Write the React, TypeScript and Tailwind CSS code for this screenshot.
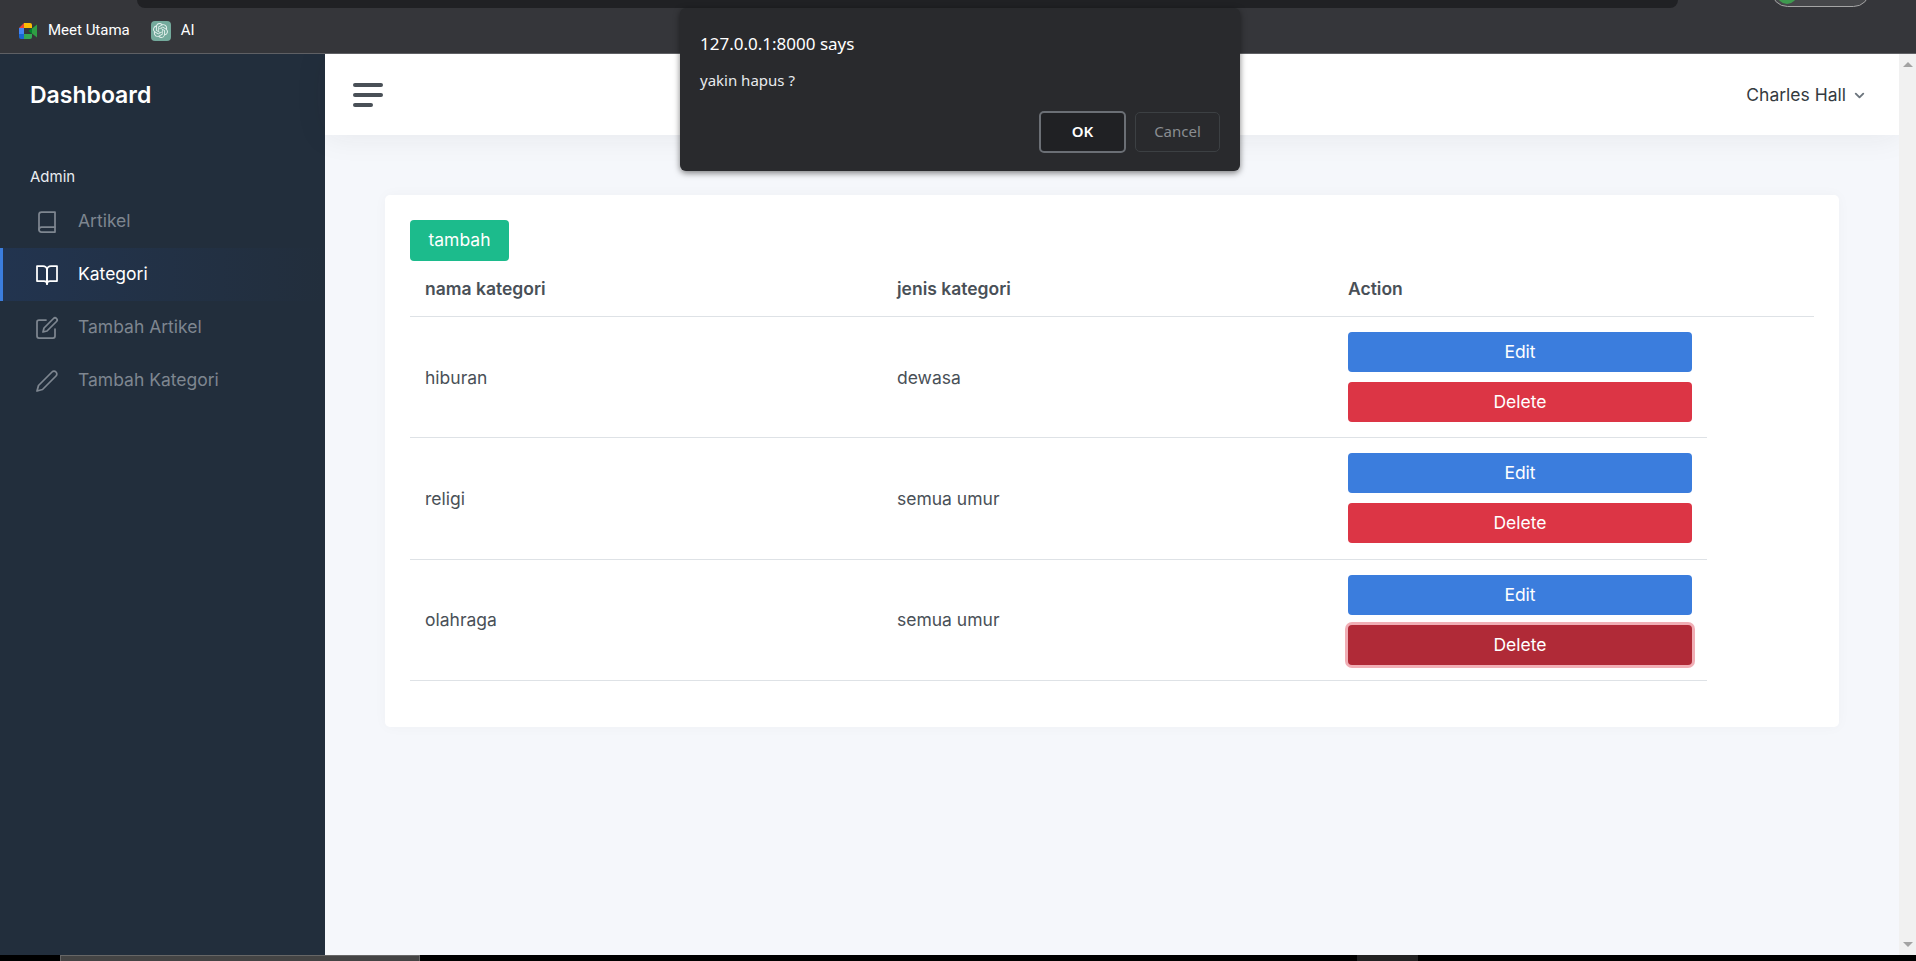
import { FiBook, FiBookOpen, FiEdit, FiEdit2, FiChevronDown } from "react-icons/fi";
import { SiOpenai } from "react-icons/si";

const menu = [
  { label: "Artikel", icon: FiBook },
  { label: "Kategori", icon: FiBookOpen, active: true },
  { label: "Tambah Artikel", icon: FiEdit },
  { label: "Tambah Kategori", icon: FiEdit2 },
];

const rows = [
  { nama: "hiburan", jenis: "dewasa" },
  { nama: "religi", jenis: "semua umur" },
  { nama: "olahraga", jenis: "semua umur", focused: true },
];

function MeetIcon() {
  return (
    <svg width="18" height="16" viewBox="0 0 18 16">
      <path d="M5 0H11a2 2 0 0 1 2 2V5H5z" fill="#fbbc04" />
      <path d="M5 0V5H0z" fill="#ea4335" />
      <path d="M0 5h5v6H0z" fill="#4285f4" />
      <path d="M0 11h5v5H2a2 2 0 0 1-2-2z" fill="#1967d2" />
      <path d="M5 11h8v3a2 2 0 0 1-2 2H5z" fill="#34a853" />
      <path d="M9.5 8 13 5v6z" fill="#00832d" />
      <path d="M13 5.5 18 1.5v13l-5-4z" fill="#2f9e44" />
    </svg>
  );
}

function GptIcon() {
  return (
    <div className="w-5 h-5 rounded-sm bg-[#74aa9c] flex items-center justify-center">
      <SiOpenai size={15} className="text-[#e3efec]" />
    </div>
  );
}

function App() {
  return (
    <div className="relative h-[961px] w-[1916px] overflow-hidden bg-black font-['Inter',sans-serif]">
      {/* browser chrome */}
      <div className="h-[54px] bg-[#35363a] border-b border-[#5f6064] relative overflow-hidden">
        <div className="absolute left-[137px] top-0 w-[1541px] h-2 bg-[#202124] rounded-b-2xl" />
        <div className="absolute left-[1771px] top-[-26px] w-[99px] h-[33px] bg-[#46474a] border border-[#a5a5a5] rounded-full" />
        <div className="absolute left-[1777px] top-[-16px] w-5 h-5 bg-[#3f9a4f] rounded-full" />
        <div className="flex items-center h-full pl-[19px] pt-[8px] text-[15px] text-white font-['Roboto',sans-serif]">
          <MeetIcon />
          <span className="ml-[11px]">Meet Utama</span>
          <span className="ml-[21px]"><GptIcon /></span>
          <span className="ml-[10px]">AI</span>
        </div>
      </div>

      <div className="flex h-[901px]">
        {/* sidebar */}
        <aside className="w-[325px] bg-[#222e3c] shrink-0">
          <div className="pl-[30px] pt-[26px] text-[23px] leading-[30px] font-semibold text-white">Dashboard</div>
          <div className="pl-[30px] mt-[57px] text-[15px] leading-[20px] text-[#e9ecef]">Admin</div>
          <div className="mt-[8px]">
            {menu.map((m) => {
              const Icon = m.icon;
              return (
                <div
                  key={m.label}
                  className={
                    m.active
                      ? "flex items-center h-[53px] pl-[32px] border-l-[3px] border-[#3b7ddd] bg-gradient-to-r from-[#22344f] to-[#222e3c] text-white"
                      : "flex items-center h-[53px] pl-[32px] border-l-[3px] border-transparent text-[#7e8690]"
                  }
                >
                  <Icon size={24} strokeWidth={1.75} />
                  <span className="ml-[19px] text-[17.5px]">{m.label}</span>
                </div>
              );
            })}
          </div>
        </aside>

        {/* content */}
        <div className="flex-1 bg-[#f5f7fb] flex flex-col">
          <header className="h-[81px] bg-white flex items-center justify-between pl-[28px] pr-[32px] shadow-[0_0_32px_rgba(33,37,41,0.08)]">
            <div className="w-[30px] flex flex-col gap-[6px]">
              <div className="h-1 w-full bg-[#495057] rounded-sm" />
              <div className="h-1 w-full bg-[#495057] rounded-sm" />
              <div className="h-1 w-5 bg-[#495057] rounded-sm" />
            </div>
            <div className="flex items-center pt-[1px] text-[17.5px] text-[#343a40]">
              Charles Hall
              <FiChevronDown className="ml-[6px] text-[#6c757d]" size={15} strokeWidth={3} />
            </div>
          </header>

          <main className="pt-[60px] px-[60px]">
            <div className="h-[532px] bg-white rounded-[5px] pt-[25px] px-[25px] shadow-[0_0_14px_rgba(33,37,41,0.03)]">
              <button className="w-[99px] h-[41px] bg-[#1cbb8c] rounded-[4px] text-white text-[17.5px] leading-[38px] pb-[2px] align-top">tambah</button>
              <div className="grid grid-cols-[472px_451px_1fr] h-[56px] items-center pl-[15px] pt-[1px] border-b border-[#dee2e6] text-[17.5px] font-semibold text-[#495057]">
                <div>nama kategori</div>
                <div>jenis kategori</div>
                <div>Action</div>
              </div>
              <div className="w-[1297px]">
                {rows.map((r) => (
                  <div
                    key={r.nama}
                    className="grid grid-cols-[472px_451px_344px] h-[121.34px] items-center pl-[15px] border-b border-[#dee2e6] text-[17.5px] text-[#495057]"
                  >
                    <div className="pt-[1px]">{r.nama}</div>
                    <div className="pt-[1px]">{r.jenis}</div>
                    <div className="flex flex-col gap-[10px]">
                      <button className="h-[40px] bg-[#3b7ddd] rounded-[4px] text-white text-[17.5px]">Edit</button>
                      <button
                        className={
                          r.focused
                            ? "h-[40px] bg-[#b02a37] rounded-[4px] text-white text-[17.5px] ring-[3px] ring-[#f1aeb5]"
                            : "h-[40px] bg-[#dc3545] rounded-[4px] text-white text-[17.5px]"
                        }
                      >
                        Delete
                      </button>
                    </div>
                  </div>
                ))}
              </div>
            </div>
          </main>
        </div>

        {/* scrollbar */}
        <div className="w-[17px] bg-[#f1f1f1] flex flex-col items-center justify-between py-[8px] shrink-0">
          <div className="w-0 h-0 border-x-[5px] border-x-transparent border-b-[5px] border-b-[#a3a3a3]" />
          <div className="w-0 h-0 border-x-[5px] border-x-transparent border-t-[5px] border-t-[#a3a3a3]" />
        </div>
      </div>

      {/* bottom strip */}
      <div className="h-[6px] bg-black relative">
        <div className="absolute left-[60px] w-[360px] h-full bg-[#444] border-l border-t border-r border-[#666]" />
        <div className="absolute left-[1357px] w-[61px] h-full bg-[#222]" />
      </div>

      {/* confirm dialog */}
      <div className="absolute left-[680px] top-[8px] w-[560px] h-[163px] bg-[#292a2d] rounded-[6px] shadow-[0_2px_6px_rgba(0,0,0,0.5)] font-['Noto_Sans',sans-serif]">
        <div className="absolute left-[20px] top-[25px] text-[17px] leading-[22px] text-white">127.0.0.1:8000 says</div>
        <div className="absolute left-[20px] top-[62px] text-[15px] leading-[20px] text-[#e8eaed]">yakin hapus ?</div>
        <div className="absolute right-[20px] top-[103px] flex items-center gap-[9px]">
          <button className="w-[87px] h-[42px] bg-[#202124] rounded-[5px] border-2 border-[#6b6f75] pb-[2px] text-[15px] font-semibold text-white">OK</button>
          <button className="w-[85px] h-[40px] bg-[#292a2d] rounded-[5px] border border-[#3c4043] pb-[2px] text-[15px] text-[#8a8d91]">Cancel</button>
        </div>
      </div>
    </div>
  );
}

export default App;
